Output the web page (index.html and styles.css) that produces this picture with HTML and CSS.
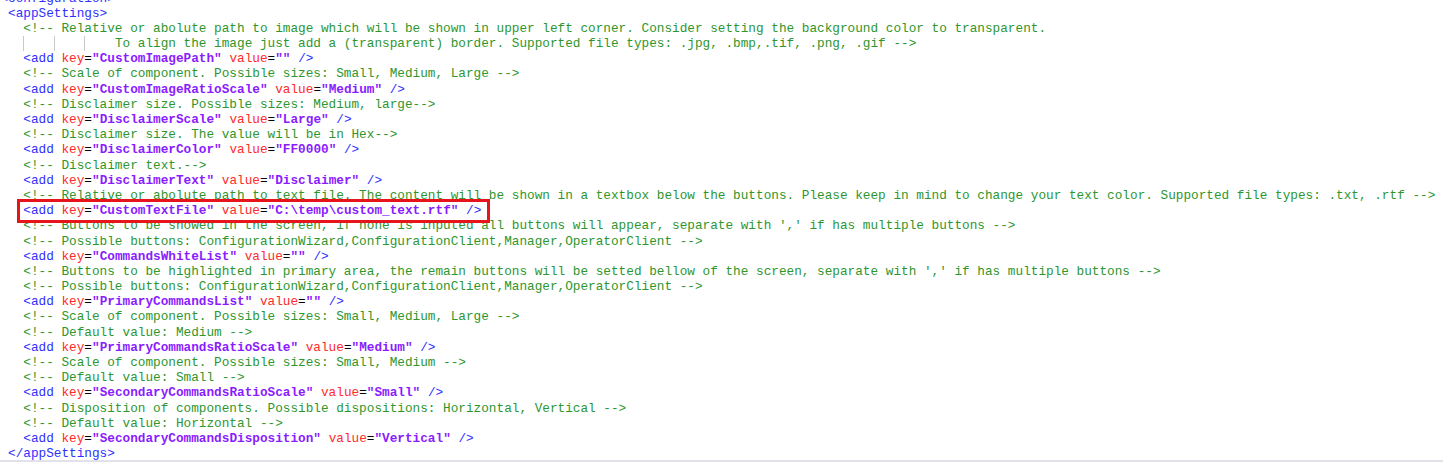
FILE: index.html
```html
<!DOCTYPE html>
<html>
<head>
<meta charset="utf-8">
<link rel="stylesheet" href="styles.css">
</head>
<body>
<div class="frame">
<div class="code">
<div class="ln"><span class="t">&lt;configuration&gt;</span></div>
<div class="ln l1"><span class="t">&lt;appSettings&gt;</span></div>
<div class="ln l2"><span class="c">&lt;!-- Relative or abolute path to image which will be shown in upper left corner. Consider setting the background color to transparent.</span></div>
<div class="ln l2"><span class="guide">    </span><span class="guide">    </span><span class="guide">    </span><span class="c">To align the image just add a (transparent) border. Supported file types: .jpg, .bmp,.tif, .png, .gif --&gt;</span></div>
<div class="ln l2"><span class="t">&lt;add</span> <span class="a">key</span>=<span class="v">"CustomImagePath"</span> <span class="a">value</span>=<span class="v">""</span> <span class="t">/&gt;</span></div>
<div class="ln l2"><span class="c">&lt;!-- Scale of component. Possible sizes: Small, Medium, Large --&gt;</span></div>
<div class="ln l2"><span class="t">&lt;add</span> <span class="a">key</span>=<span class="v">"CustomImageRatioScale"</span> <span class="a">value</span>=<span class="v">"Medium"</span> <span class="t">/&gt;</span></div>
<div class="ln l2"><span class="c">&lt;!-- Disclaimer size. Possible sizes: Medium, large--&gt;</span></div>
<div class="ln l2"><span class="t">&lt;add</span> <span class="a">key</span>=<span class="v">"DisclaimerScale"</span> <span class="a">value</span>=<span class="v">"Large"</span> <span class="t">/&gt;</span></div>
<div class="ln l2"><span class="c">&lt;!-- Disclaimer size. The value will be in Hex--&gt;</span></div>
<div class="ln l2"><span class="t">&lt;add</span> <span class="a">key</span>=<span class="v">"DisclaimerColor"</span> <span class="a">value</span>=<span class="v">"FF0000"</span> <span class="t">/&gt;</span></div>
<div class="ln l2"><span class="c">&lt;!-- Disclaimer text.--&gt;</span></div>
<div class="ln l2"><span class="t">&lt;add</span> <span class="a">key</span>=<span class="v">"DisclaimerText"</span> <span class="a">value</span>=<span class="v">"Disclaimer"</span> <span class="t">/&gt;</span></div>
<div class="ln l2"><span class="c">&lt;!-- Relative or abolute path to text file. The content will be shown in a textbox below the buttons. Please keep in mind to change your text color. Supported file types: .txt, .rtf --&gt;</span></div>
<div class="ln l2"><span class="mark"><span class="t">&lt;add</span> <span class="a">key</span>=<span class="v">"CustomTextFile"</span> <span class="a">value</span>=<span class="v">"C:\temp\custom_text.rtf"</span> <span class="t">/&gt;</span></span></div>
<div class="ln l2"><span class="c">&lt;!-- Buttons to be showed in the screen, if none is inputed all buttons will appear, separate with ',' if has multiple buttons --&gt;</span></div>
<div class="ln l2"><span class="c">&lt;!-- Possible buttons: ConfigurationWizard,ConfigurationClient,Manager,OperatorClient --&gt;</span></div>
<div class="ln l2"><span class="t">&lt;add</span> <span class="a">key</span>=<span class="v">"CommandsWhiteList"</span> <span class="a">value</span>=<span class="v">""</span> <span class="t">/&gt;</span></div>
<div class="ln l2"><span class="c">&lt;!-- Buttons to be highlighted in primary area, the remain buttons will be setted bellow of the screen, separate with ',' if has multiple buttons --&gt;</span></div>
<div class="ln l2"><span class="c">&lt;!-- Possible buttons: ConfigurationWizard,ConfigurationClient,Manager,OperatorClient --&gt;</span></div>
<div class="ln l2"><span class="t">&lt;add</span> <span class="a">key</span>=<span class="v">"PrimaryCommandsList"</span> <span class="a">value</span>=<span class="v">""</span> <span class="t">/&gt;</span></div>
<div class="ln l2"><span class="c">&lt;!-- Scale of component. Possible sizes: Small, Medium, Large --&gt;</span></div>
<div class="ln l2"><span class="c">&lt;!-- Default value: Medium --&gt;</span></div>
<div class="ln l2"><span class="t">&lt;add</span> <span class="a">key</span>=<span class="v">"PrimaryCommandsRatioScale"</span> <span class="a">value</span>=<span class="v">"Medium"</span> <span class="t">/&gt;</span></div>
<div class="ln l2"><span class="c">&lt;!-- Scale of component. Possible sizes: Small, Medium --&gt;</span></div>
<div class="ln l2"><span class="c">&lt;!-- Default value: Small --&gt;</span></div>
<div class="ln l2"><span class="t">&lt;add</span> <span class="a">key</span>=<span class="v">"SecondaryCommandsRatioScale"</span> <span class="a">value</span>=<span class="v">"Small"</span> <span class="t">/&gt;</span></div>
<div class="ln l2"><span class="c">&lt;!-- Disposition of components. Possible dispositions: Horizontal, Vertical --&gt;</span></div>
<div class="ln l2"><span class="c">&lt;!-- Default value: Horizontal --&gt;</span></div>
<div class="ln l2"><span class="t">&lt;add</span> <span class="a">key</span>=<span class="v">"SecondaryCommandsDisposition"</span> <span class="a">value</span>=<span class="v">"Vertical"</span> <span class="t">/&gt;</span></div>
<div class="ln l1"><span class="t">&lt;/appSettings&gt;</span></div>
</div>
</div>
</body>
</html>
```

FILE: styles.css
```css
html, body {
  margin: 0;
  padding: 0;
  background: #ffffff;
}

.frame {
  width: 1443px;
  height: 462px;
  box-sizing: border-box;
  overflow: hidden;
  border-bottom: 2px solid #e2e2ea;
}

.code {
  margin-top: -9.5px;
  padding-left: 0.4px;
  font-family: "Liberation Mono", "Courier New", monospace;
  font-size: 12.72px;
  line-height: 15.2px;
  color: #000000;
}

.ln {
  white-space: pre;
  height: 15.2px;
}

.l1 { padding-left: 1ch; }
.l2 { padding-left: 3ch; }

.t { color: #2f2fff; }
.a { color: #ff2a2a; }
.v { color: #8a1cff; font-weight: bold; }
.c { color: #2e962e; }

.guide {
  display: inline-block;
  height: 15.2px;
  vertical-align: top;
  box-shadow: inset 1px 0 0 #c9c9c9;
}

.mark {
  position: relative;
}

.mark::after {
  content: "";
  position: absolute;
  left: -6px;
  right: -9px;
  top: -4px;
  bottom: -5px;
  border: 3px solid #e8141c;
}
```
